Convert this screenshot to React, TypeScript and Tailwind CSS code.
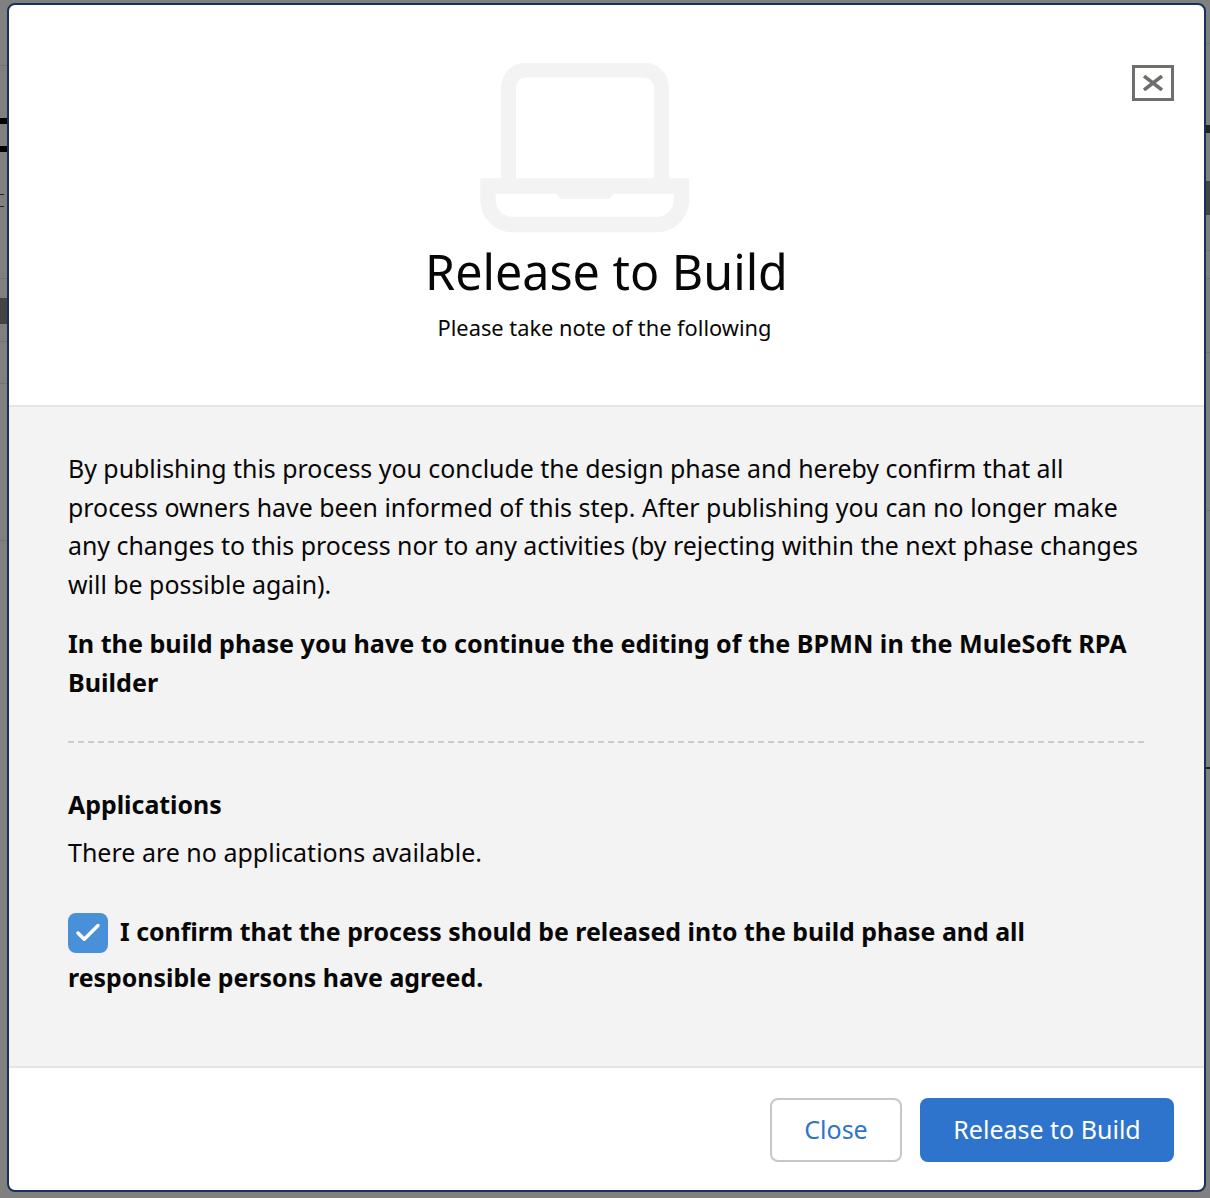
import { Check } from "lucide-react";

const font = { fontFamily: '"Noto Sans", sans-serif' };

// bits of the page behind the modal that stick out at the edges
const leftBits = [
  "top-[65px] h-px w-[7px] bg-[#737373]",
  "top-[118px] h-[6px] w-[7px] bg-black",
  "top-[146px] h-[6px] w-[7px] bg-black",
  "top-[194px] h-px w-[4px] bg-[#222]",
  "top-[206px] h-px w-[4px] bg-[#222]",
  "top-[278px] h-px w-[7px] bg-[#737373]",
  "top-[298px] h-[26px] w-[7px] bg-[#444]",
  "top-[341px] h-px w-[7px] bg-[#737373]",
  "top-[383px] h-px w-[7px] bg-[#737373]",
  "top-[540px] h-px w-[7px] bg-[#737373]",
];
const rightBits = [
  "top-[43px] h-px w-[5px] bg-[#737373]",
  "top-[125px] h-[8px] w-[4px] bg-[#222]",
  "top-[181px] h-[34px] w-[5px] bg-[#444]",
  "top-[250px] h-px w-[5px] bg-[#737373]",
  "top-[278px] h-px w-[5px] bg-[#737373]",
  "top-[352px] h-px w-[5px] bg-[#737373]",
  "top-[510px] h-px w-[5px] bg-[#737373]",
  "top-[767px] h-[2px] w-[5px] bg-[#222]",
];

function LaptopIcon() {
  return (
    <svg width="210" height="170" viewBox="0 0 210 170" fill="none" className="block">
      <path
        d="M28.500 116V26C28.500 14 36 7 48 7H162C174 7 181.500 14 181.500 26V116"
        stroke="#f3f3f3"
        strokeWidth="15"
      />
      <path
        d="M8 123H201.500V136C201.500 150 191 161.500 177 161.500H32C18 161.500 8 150 8 136V123Z"
        stroke="#f3f3f3"
        strokeWidth="15.500"
      />
      <path d="M76 130H134L130 135C129 136 128 136 127 136H83C82 136 81 136 80 135L76 130Z" fill="#f3f3f3" />
    </svg>
  );
}

export default function App() {
  return (
    <div className="relative h-[1198px] w-[1210px] overflow-hidden bg-[#808080] pt-[3px] pl-[7px]" style={font}>
      {leftBits.map((c) => (
        <div key={c} className={`absolute left-0 ${c}`} />
      ))}
      {rightBits.map((c) => (
        <div key={c} className={`absolute right-0 ${c}`} />
      ))}
      <div className="relative flex h-[1189px] w-[1199px] flex-col overflow-hidden rounded-[8px] border-2 border-[#16325c] bg-white text-[#080707]">
        <button className="absolute top-[60px] right-[30px] flex h-[36px] w-[42px] items-center justify-center border-[3px] border-[#706e6b] bg-white text-[#706e6b]">
          <svg width="22" height="16" viewBox="0 0 22 16" fill="none" stroke="currentColor" strokeWidth="3.500">
            <path d="M2 1L20 15M20 1L2 15" />
          </svg>
        </button>

        {/* header */}
        <div className="flex h-[402px] flex-col items-center border-b-2 border-[#e5e5e5] pt-[58px]">
          <div className="-ml-[44px]">
            <LaptopIcon />
          </div>
          <h1 className="mt-[8px] text-[48.400px] leading-[60px] font-normal">Release to Build</h1>
          <p className="mt-[12px] -ml-[4px] text-[21.800px] leading-[30px]">Please take note of the following</p>
        </div>

        {/* body */}
        <div className="flex-1 bg-[#f3f3f3] pt-[42px] pr-[60px] pl-[59px] text-[24.900px]">
          <p className="leading-[38.500px]">
            By publishing this process you conclude the design phase and hereby confirm that all process owners have
            been informed of this step. After publishing you can no longer make any changes to this process nor to any
            activities (by rejecting within the next phase changes will be possible again).
          </p>
          <p className="mt-[21px] text-[25.150px] leading-[38.500px] font-bold">
            In the build phase you have to continue the editing of the BPMN in the MuleSoft RPA Builder
          </p>
          <div className="mt-[40px] border-t-2 border-dashed border-[#cccccc]" />
          <h2 className="mt-[42px] leading-[38px] font-bold">Applications</h2>
          <p className="mt-[10px] text-[25px] leading-[38px]">There are no applications available.</p>
          <div className="mt-[37px] leading-[46px] font-bold">
            <span className="mr-[12px] inline-flex h-[40px] w-[40px] items-center justify-center rounded-[8px] bg-[#4a90d9] align-[-7px] leading-none text-white">
              <Check size={30} strokeWidth={2.800} />
            </span>
            I confirm that the process should be released into the build phase and all responsible persons have agreed.
          </div>
        </div>

        {/* footer */}
        <div className="flex h-[124px] items-start justify-end gap-[18px] border-t-2 border-[#e5e5e5] pt-[30px] pr-[30px]">
          <button className="h-[64px] w-[132px] rounded-[8px] border-2 border-[#c9c7c5] bg-white text-[25px] text-[#2f74cc]">
            Close
          </button>
          <button className="h-[64px] w-[254px] rounded-[8px] bg-[#2f74cc] text-[25px] text-white">
            Release to Build
          </button>
        </div>
      </div>
    </div>
  );
}
